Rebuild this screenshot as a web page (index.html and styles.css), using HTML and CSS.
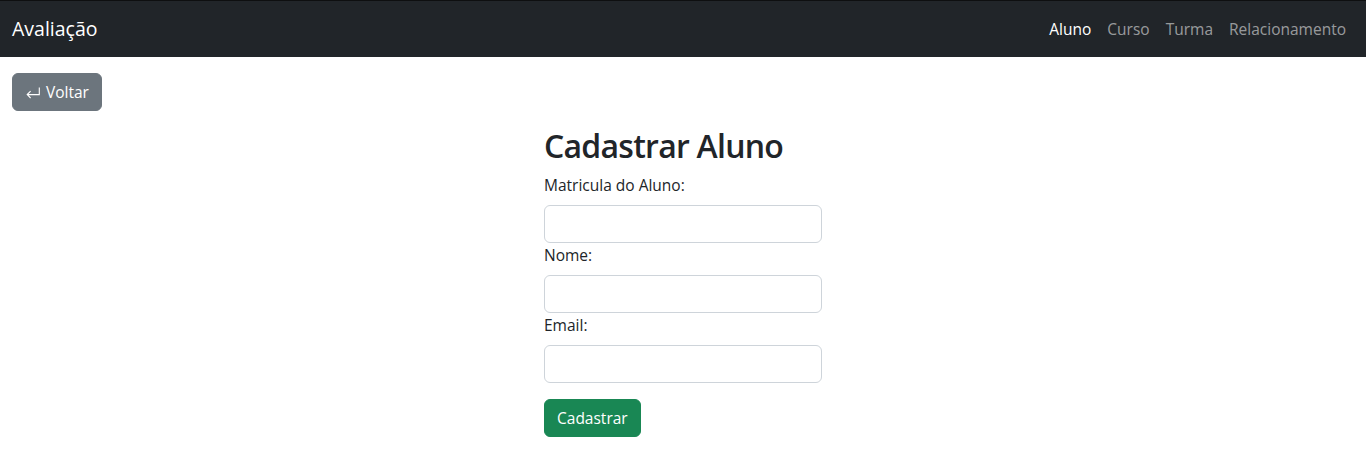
FILE: index.html
```html
<!DOCTYPE html>
<html lang="pt-BR">
<head>
<meta charset="utf-8">
<title>Avaliação</title>
<link rel="stylesheet" href="styles.css">
</head>
<body>
<nav class="navbar">
  <a class="brand" href="#">Avaliação</a>
  <ul class="nav-links">
    <li><a class="nav-link active" href="#">Aluno</a></li>
    <li><a class="nav-link" href="#">Curso</a></li>
    <li><a class="nav-link" href="#">Turma</a></li>
    <li><a class="nav-link" href="#">Relacionamento</a></li>
  </ul>
</nav>
<main class="page">
  <div class="toolbar">
    <a class="btn btn-secondary" href="#"><svg class="icon" width="14" height="12" viewBox="0 0 14 12" aria-hidden="true"><path d="M13.3 0.5 V7.6 H1.2 M4.6 4.2 L1.2 7.6 L4.6 11" fill="none" stroke="#fff" stroke-width="1.1"/></svg><span>Voltar</span></a>
  </div>
  <section class="form-wrap">
    <h2 class="title">Cadastrar Aluno</h2>
    <form class="form">
      <label class="form-label" for="matricula">Matricula do Aluno:</label>
      <input class="form-control" id="matricula" type="text">
      <label class="form-label" for="nome">Nome:</label>
      <input class="form-control" id="nome" type="text">
      <label class="form-label" for="email">Email:</label>
      <input class="form-control" id="email" type="email">
      <button class="btn btn-success" type="submit">Cadastrar</button>
    </form>
  </section>
</main>
</body>
</html>
```
FILE: styles.css
```css
* { box-sizing: border-box; }
html, body { margin: 0; }
body {
  font-family: "Open Sans", "Noto Sans", sans-serif;
  font-size: 15.5px;
  line-height: 24px;
  color: #212529;
  background: #fff;
}
a { text-decoration: none; }

.navbar {
  display: flex;
  align-items: center;
  justify-content: space-between;
  height: 57px;
  padding: 0 12px;
  background: #212529;
  border-top: 1px solid #0e0f10;
}
.brand {
  font-size: 19.5px;
  line-height: 30px;
  color: #fff;
}
.nav-links {
  display: flex;
  list-style: none;
  margin: 0;
  padding: 0;
}
.nav-link {
  display: block;
  padding: 8px;
  color: rgba(255, 255, 255, 0.55);
}
.nav-link.active { color: #fff; }

.page { padding: 16px 12px; }
.toolbar { display: flex; }

.btn {
  display: inline-flex;
  align-items: center;
  height: 38px;
  padding: 0 12px;
  border: 1px solid transparent;
  border-radius: 6px;
  font-family: inherit;
  font-size: 15.5px;
  line-height: 24px;
  color: #fff;
  cursor: pointer;
}
.btn-secondary { background: #6c757d; border-color: #6c757d; }
.btn-success { background: #198754; border-color: #198754; }
.icon { margin: 1px 6px 0 1px; }

.form-wrap {
  width: 278px;
  margin: 16px auto 0;
}
.title {
  margin: 0 0 8px;
  font-size: 32px;
  font-weight: 600;
  letter-spacing: -0.75px;
  line-height: 38.4px;
}
.form { display: flex; flex-direction: column; align-items: flex-start; }
.form-label { margin-bottom: 8px; }
.form-control {
  width: 100%;
  height: 38px;
  padding: 6px 12px;
  border: 1px solid #ced4da;
  border-radius: 6px;
  font-family: inherit;
  font-size: 16px;
}
.btn-success { margin-top: 16px; }
```
